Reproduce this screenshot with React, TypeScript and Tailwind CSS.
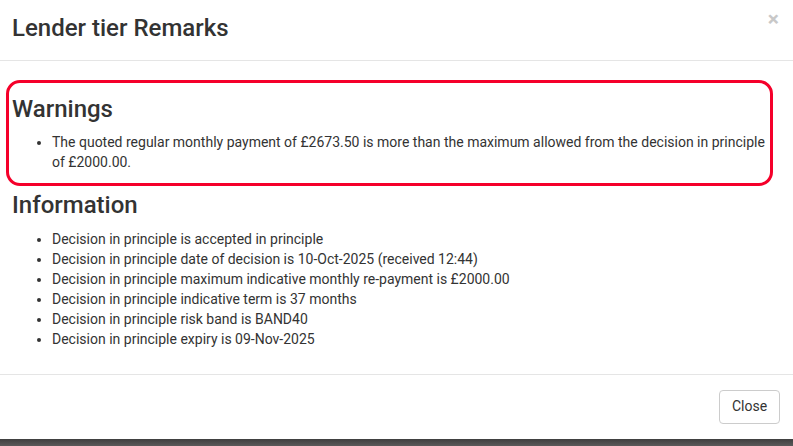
import { X } from 'lucide-react'

const info = [
  'Decision in principle is accepted in principle',
  'Decision in principle date of decision is 10-Oct-2025 (received 12:44)',
  'Decision in principle maximum indicative monthly re-payment is £2000.00',
  'Decision in principle indicative term is 37 months',
  'Decision in principle risk band is BAND40',
  'Decision in principle expiry is 09-Nov-2025',
]

export default function App() {
  return (
    <div className="h-[446px] w-[793px] overflow-hidden bg-[#555] font-['Roboto',sans-serif] text-[14px] text-[#333]">
      {/* modal */}
      <div className="h-[439px] w-full bg-white">
        {/* header */}
        <div className="relative h-[61px] border-b border-[#e5e5e5] pl-3 pt-[15px]">
          <h4 className="text-[24px] font-medium leading-[26px]">Lender tier Remarks</h4>
          <button className="absolute right-[14px] top-[9px] text-[21px] font-bold leading-none text-[#c8c8c8]">
            ×
          </button>
        </div>

        {/* body */}
        <div className="px-3 pb-[15px] pt-[15px]">
          <div className="relative">
            {/* red annotation box */}
            <div className="pointer-events-none absolute -left-[6px] right-[8px] -top-[16px] h-[106px] rounded-[14px] border-[3px] border-[#f5002a]" />
            <h3 className="mt-[20px] mb-[10px] text-[24px] font-medium leading-[26.4px]">Warnings</h3>
            <ul className="mb-[10px] list-disc pl-[40px] leading-[20px]">
              <li>
                The quoted regular monthly payment of £2673.50 is more than the maximum allowed from the decision in principle of £2000.00.
              </li>
            </ul>
          </div>
          <h3 className="mt-[20px] mb-[10px] text-[24px] font-medium leading-[26.4px]">Information</h3>
          <ul className="mb-[10px] list-disc pl-[40px] leading-[20px]">
            {info.map((line) => (
              <li key={line}>{line}</li>
            ))}
          </ul>
        </div>

        {/* footer */}
        <div className="flex justify-end border-t border-[#e5e5e5] pr-[13px] pt-[15px]">
          <button className="h-[34px] w-[61px] rounded-[4px] border border-[#ccc] bg-white text-[14px] text-[#333]">
            Close
          </button>
        </div>
      </div>
      <div className="h-[7px] bg-gradient-to-b from-[#3f3f3f] to-[#5a5a5a]" />
    </div>
  )
}
